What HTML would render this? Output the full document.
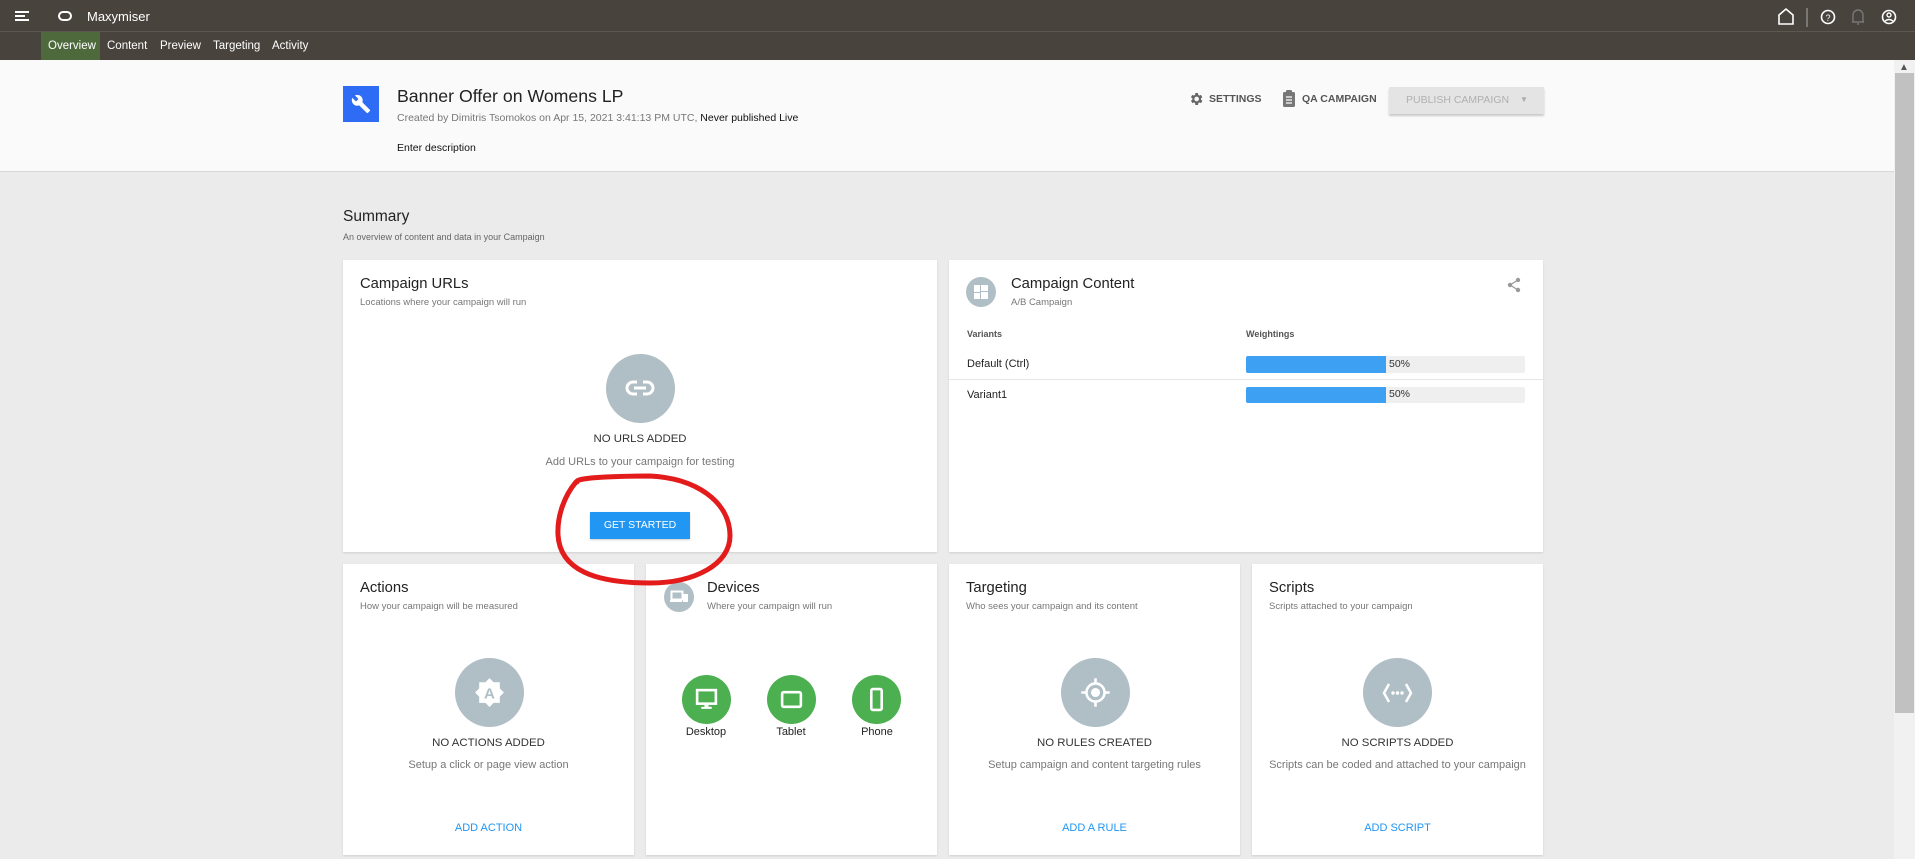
<!DOCTYPE html>
<html><head><meta charset="utf-8"><style>
*{box-sizing:border-box;margin:0;padding:0}
body{width:1915px;height:859px;overflow:hidden;background:#ebebeb;font-family:"Liberation Sans",sans-serif;position:relative;color:#222}
.a{position:absolute}
.top{left:0;top:0;width:1915px;height:32px;background:#49433e;border-bottom:1px solid #5d5752}
.nav{left:0;top:32px;width:1915px;height:28px;background:#49433e}
.tab{top:32px;height:28px;line-height:28px;color:#fff;font-size:11.5px}
.hdr{left:0;top:60px;width:1894px;height:112px;background:#fafafa;border-bottom:1px solid #d8d8d8}
.card{background:#fff;box-shadow:0 1px 2px rgba(0,0,0,.12)}
.t{font-size:14.8px;color:#222}
.s{font-size:9.5px;color:#777}
.c{text-align:center}
.circ{border-radius:50%;background:#b0bec5}
.g{border-radius:50%;background:#4caf50}
.h{font-size:11.4px;color:#333}
.p{font-size:11px;color:#777}
.lnk{font-size:11px;color:#2196f3}
</style></head><body>
<div class="a top"></div>
<div class="a nav"></div>
<div class="a" style="left:15px;top:11px;width:14px;height:2px;background:#fff"></div>
<div class="a" style="left:15px;top:15px;width:10px;height:2px;background:#fff"></div>
<div class="a" style="left:15px;top:19px;width:14px;height:2px;background:#fff"></div>
<div class="a" style="left:58px;top:11px;width:14px;height:10px;border:2px solid #fff;border-radius:5px"></div>
<div class="a" style="left:87px;top:9px;color:#fff;font-size:13px">Maxymiser</div>
<div class="a" style="left:41px;top:32px;width:59px;height:28px;background:#4e6a3d"></div>
<div class="a tab" style="left:48px">Overview</div>
<div class="a tab" style="left:107px">Content</div>
<div class="a tab" style="left:160px">Preview</div>
<div class="a tab" style="left:213px">Targeting</div>
<div class="a tab" style="left:272px">Activity</div>
<svg class="a" style="left:1776px;top:6px" width="135" height="22" viewBox="0 0 135 22">
<path d="M3 18V9l7-6 7 6v9z" fill="none" stroke="#fff" stroke-width="1.6"/>
<line x1="31" y1="2" x2="31" y2="21" stroke="#aaa"/>
<circle cx="52" cy="11" r="6.5" fill="none" stroke="#fff" stroke-width="1.6"/><text x="52" y="15" font-size="9" fill="#fff" text-anchor="middle" font-family="Liberation Sans">?</text>
<path d="M77 16V9a5 5 0 0 1 10 0v7zM76 16h12M81 18h2" fill="none" stroke="#777" stroke-width="1.4"/>
<circle cx="113" cy="11" r="6.5" fill="none" stroke="#fff" stroke-width="1.6"/><circle cx="113" cy="9" r="2" fill="none" stroke="#fff" stroke-width="1.4"/><path d="M109 15q4-3 8 0" fill="none" stroke="#fff" stroke-width="1.4"/>
</svg>
<div class="a hdr"></div>
<div class="a" style="left:1894px;top:60px;width:21px;height:799px;background:#f1f1f1"></div>
<div class="a" style="left:1895px;top:73px;width:19px;height:640px;background:#c1c1c1"></div>
<div class="a" style="left:1899px;top:62px;font-size:10px;color:#555">&#9650;</div>
<div class="a" style="left:343px;top:86px;width:36px;height:36px;background:#2f6cf6"></div>
<svg class="a" style="left:351px;top:94px" width="20" height="20" viewBox="0 0 24 24"><path d="M22.7 19l-9.1-9.1c.9-2.3.4-5-1.5-6.9-2-2-5-2.4-7.4-1.3L9 6 6 9 1.6 4.7C.4 7.1.9 10.1 2.9 12.1c1.9 1.9 4.6 2.4 6.9 1.5l9.1 9.1c.4.4 1 .4 1.4 0l2.3-2.3c.5-.4.5-1.1.1-1.4z" fill="#fff"/></svg>
<div class="a" style="left:397px;top:86px;font-size:17.7px;color:#222">Banner Offer on Womens LP</div>
<div class="a" style="left:397px;top:112px;font-size:10.5px;color:#777">Created by Dimitris Tsomokos on Apr 15, 2021 3:41:13 PM UTC, <span style="color:#111">Never published Live</span></div>
<div class="a" style="left:397px;top:142px;font-size:10.5px;color:#111">Enter description</div>
<svg class="a" style="left:1188px;top:91px" width="16" height="16" viewBox="0 0 24 24"><path d="M19.4 13a7 7 0 0 0 0-2l2.1-1.6-2-3.5-2.5 1a7 7 0 0 0-1.7-1L15 3h-4l-.4 2.9a7 7 0 0 0-1.7 1l-2.5-1-2 3.5L6.6 11a7 7 0 0 0 0 2l-2.1 1.6 2 3.5 2.5-1a7 7 0 0 0 1.7 1L11 21h4l.4-2.9a7 7 0 0 0 1.7-1l2.5 1 2-3.5zM13 15.5a3.5 3.5 0 1 1 0-7 3.5 3.5 0 0 1 0 7z" fill="#666"/></svg>
<div class="a" style="left:1209px;top:93px;font-size:10.5px;color:#555;font-weight:bold">SETTINGS</div>
<svg class="a" style="left:1283px;top:90px" width="12" height="17" viewBox="0 0 12 17"><rect x="0" y="2" width="12" height="15" rx="1.5" fill="#777"/><rect x="3" y="0" width="6" height="4" rx="1" fill="#777"/><path d="M3 7h6M3 10h6M3 13h6" stroke="#fff" stroke-width="1.2"/></svg>
<div class="a" style="left:1302px;top:93px;font-size:10.5px;color:#555;font-weight:bold">QA CAMPAIGN</div>
<div class="a" style="left:1389px;top:87px;width:155px;height:27px;background:#e4e4e4;box-shadow:0 2px 2px rgba(0,0,0,.2)"></div>
<div class="a" style="left:1406px;top:94px;font-size:10.5px;color:#b0b0b0">PUBLISH CAMPAIGN</div>
<div class="a" style="left:1520px;top:95px;font-size:8px;color:#aaa">&#9660;</div>

<div class="a" style="left:343px;top:208px;font-size:15.5px;color:#222">Summary</div>
<div class="a" style="left:343px;top:232px;font-size:9px;color:#666">An overview of content and data in your Campaign</div>

<div class="a card" style="left:343px;top:260px;width:594px;height:292px"></div>
<div class="a t" style="left:360px;top:276px">Campaign URLs</div>
<div class="a s" style="left:360px;top:297px">Locations where your campaign will run</div>
<div class="a circ" style="left:606px;top:354px;width:69px;height:69px"></div>
<svg class="a" style="left:625px;top:378px" width="30" height="20" viewBox="0 0 30 20"><path d="M12 4H8a6 6 0 0 0 0 12h4M18 4h4a6 6 0 0 1 0 12h-4M9 10h12" fill="none" stroke="#fff" stroke-width="3"/></svg>
<div class="a h c" style="left:543px;top:433px;width:194px">NO URLS ADDED</div>
<div class="a p c" style="left:493px;top:456px;width:294px">Add URLs to your campaign for testing</div>
<div class="a" style="left:590px;top:512px;width:100px;height:27px;background:#2196f3;box-shadow:0 1px 2px rgba(0,0,0,.2);color:#fff;font-size:10.5px;text-align:center;line-height:27px">GET STARTED</div>

<div class="a card" style="left:949px;top:260px;width:594px;height:292px"></div>
<div class="a circ" style="left:966px;top:277px;width:30px;height:30px"></div>
<svg class="a" style="left:974px;top:285px" width="14" height="14"><rect x="0" y="0" width="6" height="14" fill="#fff"/><rect x="7" y="0" width="7" height="6" fill="#fff"/><rect x="7" y="7" width="7" height="7" fill="#fff"/><rect x="0" y="7" width="6" height="1" fill="#b0bec5"/></svg>
<div class="a t" style="left:1011px;top:276px">Campaign Content</div>
<div class="a s" style="left:1011px;top:297px">A/B Campaign</div>
<svg class="a" style="left:1507px;top:277px" width="14" height="16" viewBox="0 0 14 16"><circle cx="11" cy="3" r="2.2" fill="#999"/><circle cx="3" cy="8" r="2.2" fill="#999"/><circle cx="11" cy="13" r="2.2" fill="#999"/><path d="M11 3L3 8l8 5" fill="none" stroke="#999" stroke-width="1.2"/></svg>
<div class="a" style="left:967px;top:329px;font-size:9px;color:#555;font-weight:bold">Variants</div>
<div class="a" style="left:1246px;top:329px;font-size:9px;color:#555;font-weight:bold">Weightings</div>
<div class="a" style="left:967px;top:358px;font-size:11px;color:#222">Default (Ctrl)</div>
<div class="a" style="left:949px;top:379px;width:594px;height:1px;background:#e6e6e6"></div>
<div class="a" style="left:967px;top:389px;font-size:11px;color:#222">Variant1</div>
<div class="a" style="left:1246px;top:356px;width:279px;height:17px;background:#efefef;border-radius:2px"></div>
<div class="a" style="left:1246px;top:356px;width:140px;height:17px;background:#3da0f3;border-radius:2px 0 0 2px"></div>
<div class="a" style="left:1389px;top:358px;font-size:10.5px;color:#333">50%</div>
<div class="a" style="left:1246px;top:387px;width:279px;height:16px;background:#efefef;border-radius:2px"></div>
<div class="a" style="left:1246px;top:387px;width:140px;height:16px;background:#3da0f3;border-radius:2px 0 0 2px"></div>
<div class="a" style="left:1389px;top:388px;font-size:10.5px;color:#333">50%</div>

<div class="a card" style="left:343px;top:564px;width:291px;height:291px"></div>
<div class="a t" style="left:360px;top:580px">Actions</div>
<div class="a s" style="left:360px;top:601px">How your campaign will be measured</div>
<div class="a circ" style="left:455px;top:658px;width:69px;height:69px"></div>
<svg class="a" style="left:473px;top:676px" width="33" height="33" viewBox="0 0 24 24"><path d="M12 1.5l3 3h4.5v4.5l3 3-3 3v4.5H15l-3 3-3-3H4.5V15l-3-3 3-3V4.5H9z" fill="#fff"/><text x="12" y="16.5" font-size="11" fill="#b0bec5" text-anchor="middle" font-family="Liberation Sans" font-weight="bold">A</text></svg>
<div class="a h c" style="left:343px;top:737px;width:291px">NO ACTIONS ADDED</div>
<div class="a p c" style="left:343px;top:759px;width:291px">Setup a click or page view action</div>
<div class="a lnk c" style="left:343px;top:822px;width:291px">ADD ACTION</div>

<div class="a card" style="left:646px;top:564px;width:291px;height:291px"></div>
<div class="a circ" style="left:664px;top:582px;width:30px;height:30px"></div>
<svg class="a" style="left:670px;top:590px" width="18" height="14"><rect x="1.5" y="1.5" width="11" height="8" fill="none" stroke="#fff" stroke-width="2"/><rect x="0" y="10" width="12" height="2" fill="#fff"/><rect x="13" y="4" width="5" height="8" fill="#fff"/></svg>
<div class="a t" style="left:707px;top:580px">Devices</div>
<div class="a s" style="left:707px;top:601px">Where your campaign will run</div>
<div class="a g" style="left:682px;top:675px;width:49px;height:49px"></div>
<svg class="a" style="left:694px;top:687px" width="25" height="25" viewBox="0 0 24 24"><rect x="3" y="3" width="18" height="13" fill="#4caf50" stroke="#fff" stroke-width="2.5"/><rect x="10" y="17" width="4" height="2" fill="#fff"/><rect x="7" y="19" width="10" height="2" fill="#fff"/></svg>
<div class="a g" style="left:767px;top:675px;width:49px;height:49px"></div>
<svg class="a" style="left:779px;top:687px" width="25" height="25" viewBox="0 0 24 24"><rect x="3" y="5" width="18" height="14" rx="1.5" fill="#4caf50" stroke="#fff" stroke-width="2.5"/></svg>
<div class="a g" style="left:852px;top:675px;width:49px;height:49px"></div>
<svg class="a" style="left:864px;top:687px" width="25" height="25" viewBox="0 0 24 24"><rect x="7" y="2" width="10" height="20" rx="1.5" fill="#4caf50" stroke="#fff" stroke-width="2.5"/></svg>
<div class="a c" style="left:666px;top:726px;width:80px;font-size:11px;color:#222">Desktop</div>
<div class="a c" style="left:751px;top:726px;width:80px;font-size:11px;color:#222">Tablet</div>
<div class="a c" style="left:837px;top:726px;width:80px;font-size:11px;color:#222">Phone</div>

<div class="a card" style="left:949px;top:564px;width:291px;height:291px"></div>
<div class="a t" style="left:966px;top:580px">Targeting</div>
<div class="a s" style="left:966px;top:601px">Who sees your campaign and its content</div>
<div class="a circ" style="left:1061px;top:658px;width:69px;height:69px"></div>
<svg class="a" style="left:1080px;top:677px" width="31" height="31" viewBox="0 0 24 24"><circle cx="12" cy="12" r="7" fill="none" stroke="#fff" stroke-width="2"/><circle cx="12" cy="12" r="3.5" fill="#fff"/><path d="M12 1v4M12 19v4M1 12h4M19 12h4" stroke="#fff" stroke-width="2"/></svg>
<div class="a h c" style="left:949px;top:737px;width:291px">NO RULES CREATED</div>
<div class="a p c" style="left:949px;top:759px;width:291px">Setup campaign and content targeting rules</div>
<div class="a lnk c" style="left:949px;top:822px;width:291px">ADD A RULE</div>

<div class="a card" style="left:1252px;top:564px;width:291px;height:291px"></div>
<div class="a t" style="left:1269px;top:580px">Scripts</div>
<div class="a s" style="left:1269px;top:601px">Scripts attached to your campaign</div>
<div class="a circ" style="left:1363px;top:658px;width:69px;height:69px"></div>
<svg class="a" style="left:1382px;top:680px" width="31" height="26" viewBox="0 0 31 26"><path d="M7 4L2 13l5 9M24 4l5 9-5 9" fill="none" stroke="#fff" stroke-width="2.5"/><circle cx="11" cy="13" r="1.7" fill="#fff"/><circle cx="15.5" cy="13" r="1.7" fill="#fff"/><circle cx="20" cy="13" r="1.7" fill="#fff"/></svg>
<div class="a h c" style="left:1252px;top:737px;width:291px">NO SCRIPTS ADDED</div>
<div class="a p c" style="left:1252px;top:759px;width:291px">Scripts can be coded and attached to your campaign</div>
<div class="a lnk c" style="left:1252px;top:822px;width:291px">ADD SCRIPT</div>

<svg class="a" style="left:550px;top:470px" width="190" height="120" viewBox="0 0 190 120"><path d="M27 12C24 8 60 6 100 6c45 2 80 25 80 60 0 28-35 47-80 47C45 113 10 100 8 65 7 45 15 25 26 12" fill="none" stroke="#e31b1b" stroke-width="5" stroke-linecap="round"/></svg>
</body></html>
